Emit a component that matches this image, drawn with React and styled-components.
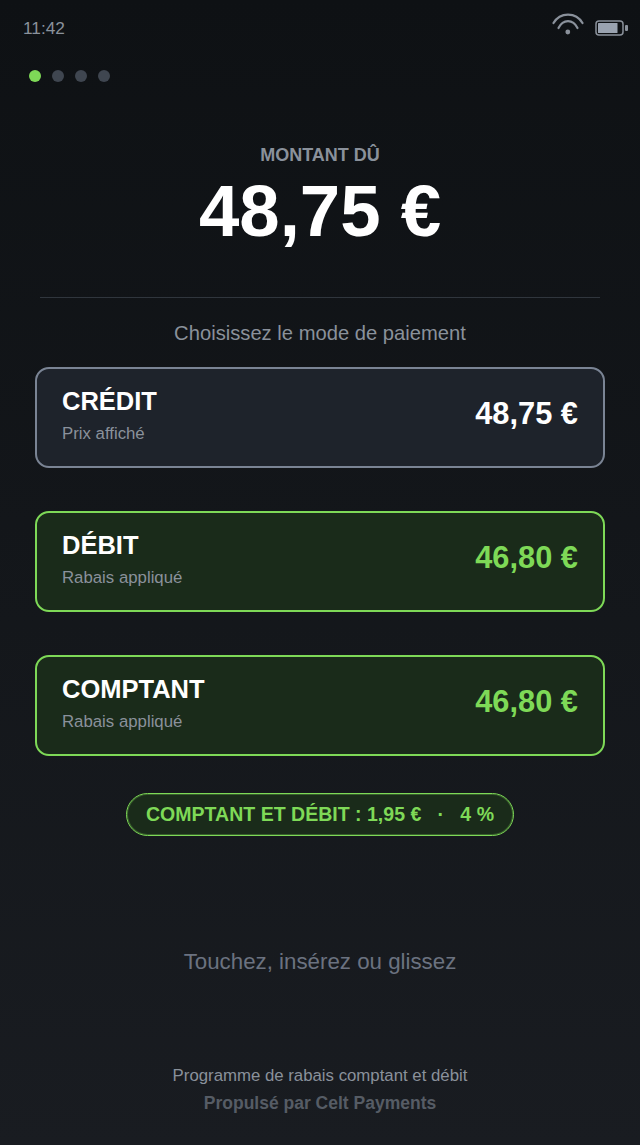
import React from "react";
import styled, { createGlobalStyle } from "styled-components";

const Global = createGlobalStyle`
  html, body { margin: 0; padding: 0; background: #191c21; }
  * { box-sizing: border-box; }
`;

const Screen = styled.div`
  width: 640px;
  height: 1145px;
  overflow: hidden;
  display: flex;
  flex-direction: column;
  background: linear-gradient(180deg, #0e1114 0%, #191c21 100%);
  font-family: "Liberation Sans", Arial, sans-serif;
  color: #fff;
`;

const StatusBar = styled.div`
  height: 56px;
  padding: 0 11px 0 23px;
  display: flex;
  align-items: center;
  justify-content: space-between;
`;

const Time = styled.span`
  font-size: 17.3px;
  color: #8a919b;
`;

const StatusIcons = styled.div`
  display: flex;
  align-items: center;
  gap: 11px;
`;

const WifiSvg = styled.svg`
  margin-bottom: 8px;
`;

const Dots = styled.div`
  display: flex;
  gap: 10.8px;
  padding: 14px 0 0 29.4px;
`;

const Dot = styled.span`
  width: 12px;
  height: 12px;
  border-radius: 50%;
  background: ${(p) => (p.$active ? "#7ed957" : "#3f4650")};
`;

const Amount = styled.section`
  padding-top: 63px;
  text-align: center;
`;

const AmountLabel = styled.div`
  font-size: 18px;
  line-height: 21px;
  font-weight: 700;
  color: #8a919b;
`;

const AmountValue = styled.div`
  margin-top: 3px;
  font-size: 72.6px;
  line-height: 83px;
  font-weight: 700;
  color: #fff;
`;

const Divider = styled.hr`
  margin: 45px 40px 0;
  height: 1px;
  border: 0;
  background: #30363d;
`;

const Prompt = styled.div`
  margin-top: 24px;
  text-align: center;
  font-size: 20.2px;
  line-height: 23px;
  color: #8a919b;
`;

const Options = styled.div`
  margin-top: 22px;
  padding: 0 35px;
  display: flex;
  flex-direction: column;
  gap: 43px;
`;

const Card = styled.div`
  height: 101px;
  padding: 0 25px;
  display: flex;
  align-items: center;
  justify-content: space-between;
  border-radius: 14px;
  border: 2px solid ${(p) => (p.$discount ? "#7ed957" : "#7a8494")};
  background: ${(p) => (p.$discount ? "#1a2b1a" : "#1e232b")};
`;

const CardText = styled.div`
  display: flex;
  flex-direction: column;
  gap: 8px;
  margin-top: -6px;
`;

const CardTitle = styled.div`
  font-size: 25.5px;
  line-height: 30px;
  font-weight: 700;
  color: #fff;
`;

const CardSub = styled.div`
  font-size: 16.8px;
  line-height: 20px;
  color: #8a919b;
`;

const Price = styled.div`
  font-size: 30.8px;
  line-height: 34px;
  font-weight: 700;
  margin-top: -7px;
  color: ${(p) => (p.$discount ? "#7ed957" : "#fff")};
`;

const PillRow = styled.div`
  margin-top: 37px;
  display: flex;
  justify-content: center;
`;

const Pill = styled.div`
  height: 43px;
  padding: 0 19px;
  display: flex;
  align-items: center;
  border-radius: 22px;
  border: 1px solid #7ed957;
  box-shadow: inset 0 0 0 1px rgba(126, 217, 87, 0.3);
  background: #1a2b1a;
  color: #7ed957;
  font-size: 19.55px;
  font-weight: 700;
  white-space: pre;
`;

const Tap = styled.div`
  margin-top: 113px;
  text-align: center;
  font-size: 22.3px;
  line-height: 26px;
  color: #6b7280;
`;

const Footer = styled.footer`
  margin-top: 91px;
  text-align: center;
`;

const FooterLine = styled.div`
  font-size: 16.8px;
  line-height: 20px;
  color: #8a919b;
`;

const FooterBrand = styled.div`
  margin-top: 7px;
  font-size: 17.5px;
  line-height: 21px;
  font-weight: 700;
  color: #565c65;
`;

const Wifi = () => (
  <WifiSvg width="32" height="22" viewBox="0 0 32 22" fill="none" stroke="#8a919b" strokeWidth="2.2" strokeLinecap="round">
    <path d="M1.5 10C8 -1.3 24 -1.3 30.5 10" />
    <path d="M6.5 15C11 5.7 21 5.7 25.5 15" />
    <circle cx="15.8" cy="19" r="2.4" fill="#8a919b" stroke="none" />
  </WifiSvg>
);

const Battery = () => (
  <svg width="34" height="16" viewBox="0 0 34 16" fill="none">
    <rect x="1" y="1" width="27" height="14" rx="3" stroke="#8a919b" strokeWidth="1.5" />
    <rect x="3" y="3" width="19.5" height="10" rx="0.5" fill="#9aa3b0" />
    <rect x="30" y="5" width="3" height="6" rx="1" fill="#8a919b" />
  </svg>
);

const options = [
  { name: "CRÉDIT", note: "Prix affiché", price: "48,75 €" },
  { name: "DÉBIT", note: "Rabais appliqué", price: "46,80 €", discount: true },
  { name: "COMPTANT", note: "Rabais appliqué", price: "46,80 €", discount: true },
];

export default function App() {
  return (
    <Screen>
      <Global />
      <StatusBar>
        <Time>11:42</Time>
        <StatusIcons>
          <Wifi />
          <Battery />
        </StatusIcons>
      </StatusBar>
      <Dots>
        <Dot $active />
        <Dot />
        <Dot />
        <Dot />
      </Dots>
      <Amount>
        <AmountLabel>MONTANT DÛ</AmountLabel>
        <AmountValue>48,75 €</AmountValue>
      </Amount>
      <Divider />
      <Prompt>Choisissez le mode de paiement</Prompt>
      <Options>
        {options.map((o) => (
          <Card key={o.name} $discount={o.discount}>
            <CardText>
              <CardTitle>{o.name}</CardTitle>
              <CardSub>{o.note}</CardSub>
            </CardText>
            <Price $discount={o.discount}>{o.price}</Price>
          </Card>
        ))}
      </Options>
      <PillRow>
        <Pill>{"COMPTANT ET DÉBIT : 1,95 €   ·   4 %"}</Pill>
      </PillRow>
      <Tap>Touchez, insérez ou glissez</Tap>
      <Footer>
        <FooterLine>Programme de rabais comptant et débit</FooterLine>
        <FooterBrand>Propulsé par Celt Payments</FooterBrand>
      </Footer>
    </Screen>
  );
}
